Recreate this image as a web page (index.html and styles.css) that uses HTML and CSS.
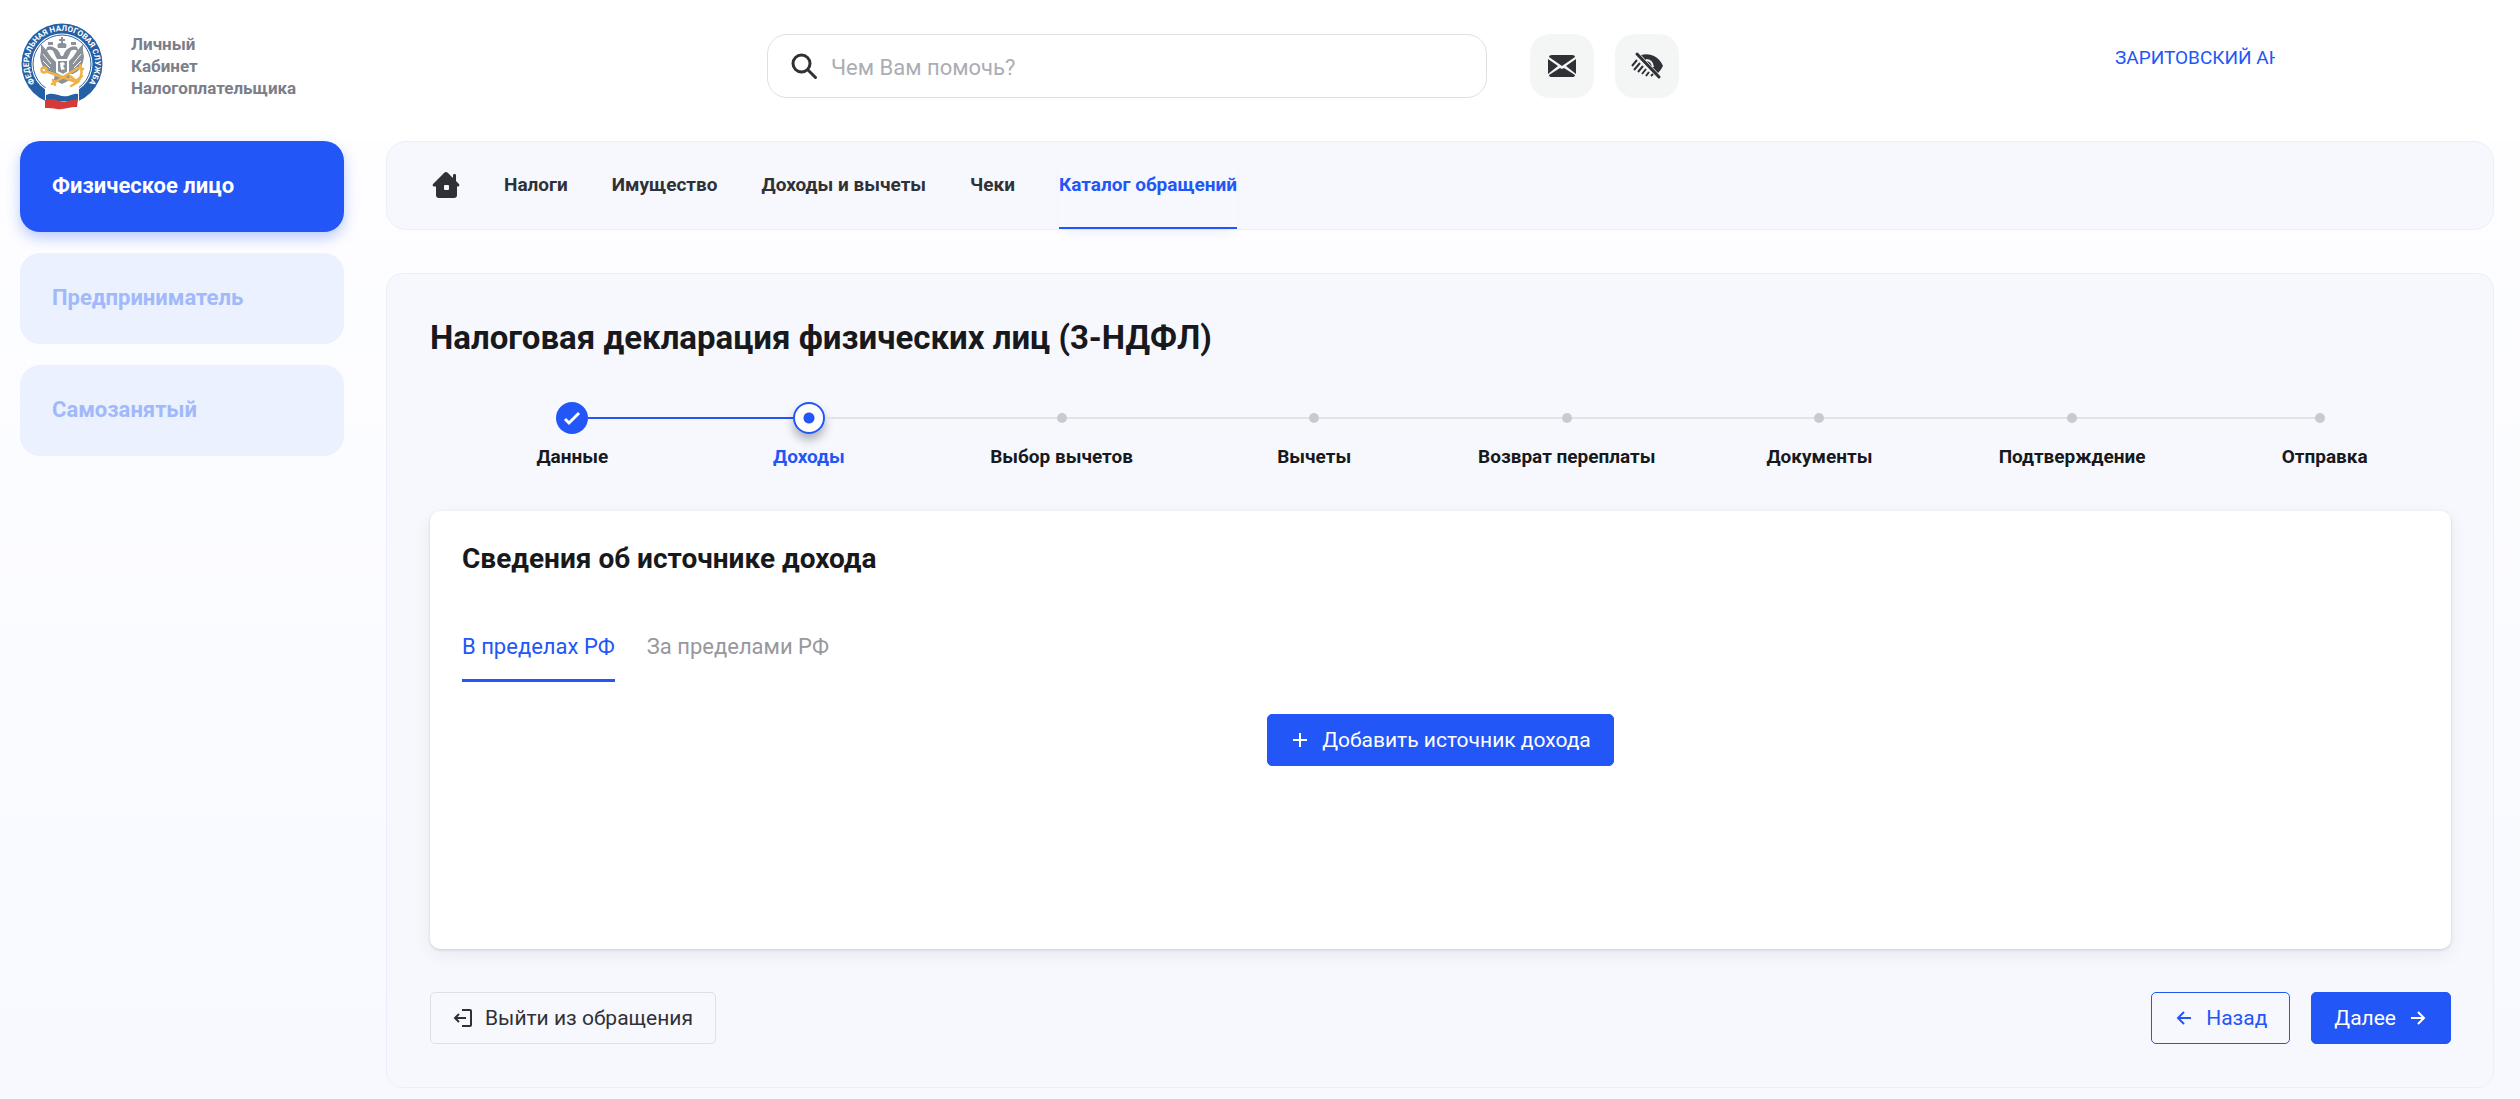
FILE: index.html
```html
<!DOCTYPE html>
<html lang="ru">
<head>
<meta charset="utf-8">
<title>Налоговая декларация физических лиц (3-НДФЛ)</title>
<meta name="viewport" content="width=device-width, initial-scale=1">
<link rel="stylesheet" href="styles.css">
</head>
<body>
<header class="header">
  <a class="brand" href="#">
    <svg class="brand-logo" viewBox="0 0 84 88" role="img" aria-label="Федеральная налоговая служба">
      <defs><path id="ring" d="M18.700 65.300A33 33 0 1 1 65.300 65.300"/></defs>
      <circle cx="42" cy="42" r="40.500" fill="#2560a5"/>
      <circle cx="42" cy="42" r="30.500" fill="#fff"/>
      <circle cx="42" cy="42" r="29" fill="none" stroke="#2560a5" stroke-width="1"/>
      <text class="logo-text"><textPath href="#ring" startOffset="50%" text-anchor="middle">ФЕДЕРАЛЬНАЯ НАЛОГОВАЯ СЛУЖБА</textPath></text>
      <g fill="#8b9199">
        <path d="M41 15h2v2h2v2h-2v2q5 0 3 5h-8q-2-5 3-5v-2h-2v-2h2z"/>
        <path d="M28 20h5v3h-5zM51 20h5v3h-5z"/>
        <path d="M37 37l-3-6q-1-4-6-3l-3 3 2-6q4-2 8 1 4 2 6 8h2q2-6 6-8 4-3 8-1l2 6-3-3q-5-1-6 3l-3 6 3 14H34z"/>
        <path d="M36 40l-5-5-4-6-6-7 0 7-1 6 1 5 2 5 3 4 5 3h6zM48 40l5-5 4-6 6-7 0 7 1 6-1 5-2 5-3 4-5 3h-6z"/>
        <path d="M35 50h14l1 8-8 4-8-4z"/>
      </g>
      <path d="M23 32l8 10M23 39l7 7M61 32l-8 10M61 39l-7 7" stroke="#fff" stroke-width="1" fill="none"/>
      <path d="M37 38h11v12l-5 3-6-3z" fill="#8b9199" stroke="#fff" stroke-width="2"/>
      <path d="M40 41l3-1 2 2-2 2 2 3-4 1z" fill="#fff"/>
      <g fill="none" stroke="#edb347" stroke-width="2.500" stroke-linecap="round" stroke-linejoin="round">
        <circle cx="24" cy="48" r="2.500"/>
        <path d="M28 50l28 10M32 62l26-16M60 43q4 8-2 17l-7 4M33 58l2 5M50 54l6 5 6-5M57 46l6 1"/>
      </g>
      <path d="M25 66c9-4 15 3 23 1 4-1 7-3 11-2v17c-9-3-17 4-25 2-4-1-6 0-9 1z" fill="#fff"/>
      <path d="M26 73c9-4 14 3 22 1 4-1 7-3 10-2v7H26z" fill="#2560a5"/>
      <path d="M25 78c9-3 15 3 23 1 4-1 7-2 10-2l-1 8c-9 0-13 3-20 2-4-1-8-1-12-1z" fill="#d23b37"/>
    </svg>
    <span class="brand-name">Личный<br>Кабинет<br>Налогоплательщика</span>
  </a>
  <div class="header-tools">
    <label class="search">
      <svg class="search-icon" viewBox="0 0 28 28" aria-hidden="true"><circle cx="11.500" cy="11.500" r="8.500"/><path d="M18 18l7.500 7.500"/></svg>
      <input class="search-input" type="search" placeholder="Чем Вам помочь?" aria-label="Поиск">
    </label>
    <button class="tool" type="button" aria-label="Сообщения">
      <svg class="tool-icon" viewBox="0 0 32 32" aria-hidden="true"><path d="M6 5h20q3 0 3 2L16 16 3 7q0-2 3-2zM2 9l10 7-10 8zM30 9v15l-10-8zM14 18l2 1 2-1 11 7q0 2-3 2H6q-3 0-3-2z"/></svg>
    </button>
    <button class="tool" type="button" aria-label="Версия для слабовидящих">
      <svg class="tool-icon" viewBox="0 0 32 32" aria-hidden="true"><path d="M10 5q7-2 13 1 6 3 9 10-2 4-5 7z"/><path class="cut" d="M15 10q6 0 7 7"/><path class="slash" d="M6 4l22 23"/><path class="lash" d="M1 16l5-6M3 20l6-7M7 22l5-6M11 24l4-5M15 26l3-4M20 26l2-2"/></svg>
    </button>
  </div>
  <a class="user" href="#">ЗАРИТОВСКИЙ АН</a>
</header>
<div class="layout">
  <aside class="sidebar">
    <button class="role role-active" type="button">Физическое лицо</button>
    <button class="role" type="button">Предприниматель</button>
    <button class="role" type="button">Самозанятый</button>
  </aside>
  <div class="content">
    <nav class="nav">
      <a class="nav-link" href="#" aria-label="Главная">
        <svg class="home-icon" viewBox="-2 -1 30 30" aria-hidden="true"><path fill-rule="evenodd" d="M12 2q2-2 4 0l5 5V4q0-1 1.500-1T24 4v6l3 3q1 2-1 2.500h-1V24q0 3-3 3H7q-3 0-3-3v-8.500H2Q0 15 1 13zM13 14q-1 0-1 1v3q0 1 1 1h3q1 0 1-1v-3q0-1-1-1z"/></svg>
      </a>
      <a class="nav-link" href="#">Налоги</a>
      <a class="nav-link" href="#">Имущество</a>
      <a class="nav-link" href="#">Доходы и вычеты</a>
      <a class="nav-link" href="#">Чеки</a>
      <a class="nav-link nav-active" href="#" aria-current="page">Каталог обращений</a>
    </nav>
    <main class="panel">
      <h1 class="title">Налоговая декларация физических лиц (3-НДФЛ)</h1>
      <ol class="steps">
        <li class="step step-done"><div class="track"><span class="line"></span><span class="marker"><svg viewBox="0 0 32 32" aria-hidden="true"><path d="M9 17l4 4 10-10"/></svg></span><span class="line"></span></div><span class="step-label">Данные</span></li>
        <li class="step step-current"><div class="track"><span class="line"></span><span class="marker"></span><span class="line"></span></div><span class="step-label">Доходы</span></li>
        <li class="step"><div class="track"><span class="line"></span><span class="marker"></span><span class="line"></span></div><span class="step-label">Выбор вычетов</span></li>
        <li class="step"><div class="track"><span class="line"></span><span class="marker"></span><span class="line"></span></div><span class="step-label">Вычеты</span></li>
        <li class="step"><div class="track"><span class="line"></span><span class="marker"></span><span class="line"></span></div><span class="step-label">Возврат переплаты</span></li>
        <li class="step"><div class="track"><span class="line"></span><span class="marker"></span><span class="line"></span></div><span class="step-label">Документы</span></li>
        <li class="step"><div class="track"><span class="line"></span><span class="marker"></span><span class="line"></span></div><span class="step-label">Подтверждение</span></li>
        <li class="step step-last"><div class="track"><span class="line"></span><span class="marker"></span><span class="line"></span></div><span class="step-label">Отправка</span></li>
      </ol>
      <section class="card">
        <h2 class="card-title">Сведения об источнике дохода</h2>
        <div class="tabs" role="tablist">
          <button class="tab tab-active" type="button" role="tab" aria-selected="true">В пределах РФ</button>
          <button class="tab" type="button" role="tab" aria-selected="false">За пределами РФ</button>
        </div>
        <button class="btn btn-primary btn-add" type="button">
          <svg class="btn-icon" viewBox="0 0 20 20" aria-hidden="true"><path d="M10 3v14M3 10h14"/></svg>Добавить источник дохода
        </button>
      </section>
      <div class="actions">
        <button class="btn btn-plain" type="button">
          <svg class="btn-icon" viewBox="0 0 20 20" aria-hidden="true"><path d="M9 2h8q1 0 1 1v14q0 1-1 1H9M13 10H2M6 6l-4 4 4 4"/></svg>Выйти из обращения
        </button>
        <button class="btn btn-outline" type="button">
          <svg class="btn-icon" viewBox="0 0 20 20" aria-hidden="true"><path d="M17 10H4M10 4l-6 6 6 6"/></svg>Назад
        </button>
        <button class="btn btn-primary" type="button">
          Далее<svg class="btn-icon" viewBox="0 0 20 20" aria-hidden="true"><path d="M3 10h13M10 4l6 6-6 6"/></svg>
        </button>
      </div>
    </main>
  </div>
</div>
</body>
</html>
```
FILE: styles.css
```css
:root {
  --blue: #2256f6;
  --ink: #18191c;
  --dark: #303136;
}
* { box-sizing: border-box; }
body {
  margin: 0;
  font-family: Roboto, "Liberation Sans", sans-serif;
  color: var(--ink);
  background: #f8faff;
}
a { color: inherit; text-decoration: none; }
button { font: inherit; cursor: pointer; }

.header {
  display: grid;
  grid-template-columns: 747px 1fr 405px;
  height: 141px;
  padding-left: 20px;
  background: #fff;
}
.brand { display: flex; align-items: flex-start; gap: 27px; padding-top: 22px; }
.brand-logo { width: 84px; height: 88px; }
.logo-text { font: 700 8px Roboto, sans-serif; fill: #fff; }
.brand-name { padding-top: 11px; font-size: 17px; line-height: 22px; font-weight: 700; color: #7b7e88; }
.header-tools { display: flex; align-items: flex-start; gap: 21px; padding-top: 34px; }
.search {
  display: flex;
  align-items: center;
  gap: 13px;
  flex: 0 1 720px;
  height: 64px;
  margin-right: 22px;
  padding: 0 22px;
  border: 1px solid #dfe0e2;
  border-radius: 20px;
}
.search-icon { width: 28px; height: 28px; fill: none; stroke: var(--dark); stroke-width: 3; stroke-linecap: round; }
.search-input { flex: 1; padding: 2px 0 0; border: 0; outline: 0; background: none; font: 22px Roboto, sans-serif; color: var(--ink); }
.search-input::placeholder { color: #acadb3; }
.tool { display: grid; place-items: center; width: 64px; height: 64px; padding: 0; border: 0; border-radius: 20px; background: #f4f6f5; }
.tool-icon { width: 32px; height: 32px; fill: var(--dark); }
.tool-icon .slash { fill: none; stroke: var(--dark); stroke-width: 3; stroke-linecap: round; }
.tool-icon .lash { fill: none; stroke: var(--dark); stroke-width: 2; }
.tool-icon .cut { fill: none; stroke: #f4f6f5; stroke-width: 2; }
.user { width: 160px; height: 24px; margin-top: 46px; overflow: hidden; white-space: nowrap; font-size: 19px; line-height: 24px; color: var(--blue); }

.layout {
  display: grid;
  grid-template-columns: 324px minmax(0, 1fr);
  gap: 42px;
  padding: 0 26px 12px 20px;
  background: linear-gradient(#fefeff, #f7f9ff);
}
.sidebar { display: flex; flex-direction: column; gap: 21px; }
.role { height: 91px; padding: 0 32px 2px; border: 0; border-radius: 20px; background: #ebf1fe; color: #a1b9fb; font-size: 22px; font-weight: 700; text-align: left; }
.role-active { background: var(--blue); color: #fff; box-shadow: 0 6px 14px rgba(34, 86, 246, .3); }

.nav { display: flex; gap: 44px; height: 89px; padding: 0 43px; border: 1px solid #ebeffd; border-radius: 20px; background: #f6f8fe; }
.nav-link { display: flex; align-items: center; color: var(--dark); font-size: 19px; font-weight: 700; border-bottom: 2px solid transparent; }
.nav-active { color: var(--blue); border-color: var(--blue); box-shadow: 0 10px 10px -6px rgba(34, 86, 246, .08); }
.home-icon { width: 30px; height: 30px; fill: var(--dark); }

.panel { margin-top: 43px; padding: 44px 42px 43px 43px; border: 1px solid #ebeffd; border-radius: 16px; background: #f6f8fe; }
.title { margin: 0; font-size: 33px; line-height: 40px; font-weight: 700; }
.steps { display: grid; grid-template-columns: repeat(8, 1fr); margin: 44px 0 42px; padding: 0; list-style: none; }
.track { display: flex; align-items: center; height: 32px; }
.line { flex: 1; height: 2px; background: #e2e3e5; }
.marker { width: 10px; height: 10px; border-radius: 50%; background: #c9cacf; }
.step-label { display: block; margin-top: 11px; text-align: center; font-size: 19px; line-height: 24px; font-weight: 700; }
.step-done { padding-left: 32px; }
.step-done .line { background: var(--blue); }
.step-done .line:first-child, .step-last .line:last-child { background: none; }
.step-done .marker { width: 32px; height: 32px; background: var(--blue); }
.step-done svg { display: block; fill: none; stroke: #fff; stroke-width: 3; }
.step-current .line:first-child { background: var(--blue); }
.step-current .marker { width: 32px; height: 32px; border: 2px solid var(--blue); background: radial-gradient(circle, var(--blue) 5px, #fff 6px); box-shadow: 0 6px 10px rgba(20, 20, 30, .3); }
.step-current .step-label { color: var(--blue); }
.step-last .track { padding-right: 10px; }

.card { display: flex; flex-direction: column; align-items: flex-start; min-height: 438px; padding: 32px; border-radius: 10px; background: #fff; box-shadow: 0 1px 3px rgba(20, 20, 40, .15), 0 6px 20px rgba(20, 20, 40, .06); }
.card-title { margin: 0; font-size: 28px; line-height: 32px; font-weight: 700; }
.tabs { display: flex; gap: 32px; margin: 42px 0 32px; }
.tab { height: 65px; padding: 0 0 3px; border: 0; border-bottom: 3px solid transparent; background: none; color: #97989e; font-size: 22px; }
.tab-active { color: var(--blue); border-color: var(--blue); }

.btn { display: flex; align-items: center; gap: 12px; height: 52px; padding: 0 22px; border: 1px solid; border-radius: 5px; font-size: 21px; }
.btn-icon { width: 20px; height: 20px; fill: none; stroke: currentColor; stroke-width: 2; }
.btn-primary { border-color: var(--blue); background: var(--blue); color: #fff; }
.btn-outline { border-color: var(--blue); background: none; color: var(--blue); }
.btn-plain { margin-right: auto; border-color: #dfe0e4; background: none; color: var(--dark); }
.btn-add { align-self: center; }
.actions { display: flex; gap: 21px; margin-top: 43px; }
```
